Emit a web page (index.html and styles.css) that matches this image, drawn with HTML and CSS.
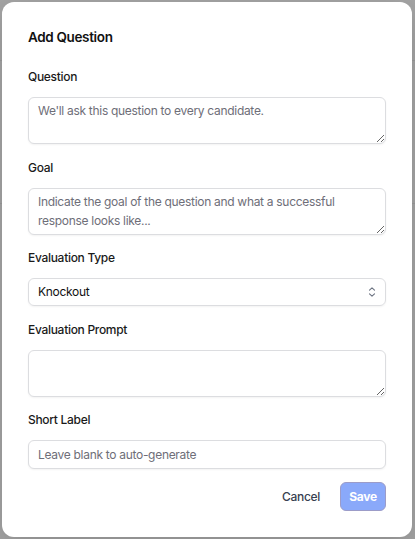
FILE: index.html
```html
<!DOCTYPE html>
<html lang="en">
<head>
<meta charset="utf-8">
<title>Add Question</title>
<link rel="stylesheet" href="styles.css">
</head>
<body>
<div class="backdrop">
  <div class="bg-line bg-line-1"></div>
  <div class="bg-line bg-line-2"></div>
  <form class="modal">
    <h2 class="title">Add Question</h2>
    <div class="field">
      <label class="label">Question</label>
      <textarea class="control area" placeholder="We'll ask this question to every candidate."></textarea>
    </div>
    <div class="field">
      <label class="label">Goal</label>
      <textarea class="control area" placeholder="Indicate the goal of the question and what a successful response looks like..."></textarea>
    </div>
    <div class="field">
      <label class="label">Evaluation Type</label>
      <div class="select">
        <span class="select-value">Knockout</span>
        <svg class="chev" width="8" height="12" viewBox="0 0 8 12" fill="none" stroke="#6b7280" stroke-width="1.1" stroke-linecap="round" stroke-linejoin="round"><path d="M1.5 4.2 L4 1.8 L6.5 4.2"/><path d="M1.5 7.8 L4 10.2 L6.5 7.8"/></svg>
      </div>
    </div>
    <div class="field">
      <label class="label">Evaluation Prompt</label>
      <textarea class="control area"></textarea>
    </div>
    <div class="field">
      <label class="label">Short Label</label>
      <input class="control input" type="text" placeholder="Leave blank to auto-generate">
    </div>
    <div class="actions">
      <button type="button" class="btn-cancel">Cancel</button>
      <button type="button" class="btn-save">Save</button>
    </div>
  </form>
</div>
</body>
</html>
```
FILE: styles.css
```css
* { box-sizing: border-box; }
html, body { margin: 0; padding: 0; }
body {
  background: #a4a4a4;
  font-family: Inter, "Noto Sans", "Liberation Sans", sans-serif;
  color: #111827;
  width: 415px;
  height: 539px;
  overflow: hidden;
  letter-spacing: -0.3px;
}
.backdrop {
  position: relative;
  width: 415px;
  height: 539px;
  padding: 2px 3px 2px 2px;
}
.bg-line {
  position: absolute;
  left: 0;
  right: 0;
  height: 1px;
  background: #9a9a9a;
}
.bg-line-1 { top: 60px; }
.bg-line-2 { top: 203px; }
.modal {
  position: relative;
  height: 535px;
  background: #ffffff;
  border-radius: 12px;
  padding: 25px 26px 26px 26px;
  display: flex;
  flex-direction: column;
  box-shadow: 0 10px 30px rgba(0,0,0,0.15);
}
.title {
  margin: 0 0 22px 0;
  font-size: 13.5px;
  line-height: 20px;
  font-weight: 600;
  letter-spacing: -0.35px;
  color: #111111;
}
.field {
  display: flex;
  flex-direction: column;
  margin-bottom: 15.5px;
}
.label {
  font-size: 12px;
  line-height: 16px;
  font-weight: 500;
  color: #1a1a1a;
  margin-bottom: 12px;
}
.control {
  display: block;
  width: 100%;
  font-family: inherit;
  font-size: 12px;
  letter-spacing: -0.3px;
  color: #111827;
  background: #fff;
  border: 1px solid #dcdde0;
  border-radius: 6px;
  box-shadow: 0 1px 2px rgba(0,0,0,0.05);
  outline: none;
  margin: 0;
}
.control::placeholder { color: #6e6e78; opacity: 1; }
.area {
  height: 47px;
  line-height: 19.5px;
  padding: 3px 9px;
  resize: vertical;
}
.input {
  height: 29px;
  line-height: 19px;
  padding: 4px 9px;
}
.select {
  height: 28px;
  border: 1px solid #dcdde0;
  border-radius: 6px;
  box-shadow: 0 1px 2px rgba(0,0,0,0.05);
  display: flex;
  align-items: center;
  justify-content: space-between;
  padding: 0 9px 0 9px;
}
.select-value {
  font-size: 12px;
  line-height: 16px;
  color: #111111;
}
.chev { display: block; }
.actions {
  display: flex;
  justify-content: flex-end;
  align-items: center;
  gap: 20px;
  margin-top: -2.5px;
}
.btn-cancel {
  background: none;
  border: none;
  padding: 0;
  font-family: inherit;
  font-size: 12px;
  font-weight: 500;
  letter-spacing: -0.3px;
  color: #374151;
}
.btn-save {
  height: 29px;
  width: 46px;
  padding: 0;
  background: #8aa9fa;
  border: 1px solid #9c9cc8;
  border-radius: 6px;
  font-family: inherit;
  font-size: 12px;
  font-weight: 700;
  letter-spacing: -0.3px;
  color: #ffffff;
}
```
